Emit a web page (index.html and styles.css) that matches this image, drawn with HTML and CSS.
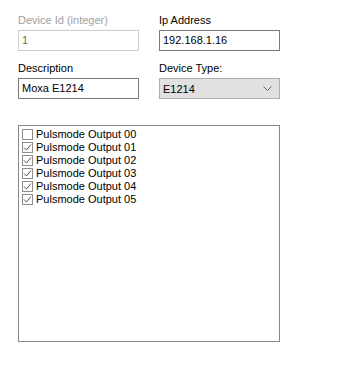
FILE: index.html
```html
<!DOCTYPE html>
<html lang="en">
<head>
    <meta charset="UTF-8">
    <title>Device</title>
    <link rel="stylesheet" href="styles.css">
</head>
<body>

<div class="form-grid">
    <div class="field">
        <label class="field-label disabled">Device Id (integer)</label>
        <div class="text-box disabled">1</div>
    </div>
    <div class="field">
        <label class="field-label">Ip Address</label>
        <div class="text-box">192.168.1.16</div>
    </div>
    <div class="field">
        <label class="field-label">Description</label>
        <div class="text-box">Moxa E1214</div>
    </div>
    <div class="field">
        <label class="field-label">Device Type:</label>
        <div class="combo-box">
            <span>E1214</span>
            <svg class="chevron" width="9" height="5" viewBox="0 0 9 5">
                <path d="M0.5 0.5 L4.5 4.5 L8.5 0.5" fill="none" stroke="#606060" stroke-width="1"/>
            </svg>
        </div>
    </div>
</div>

<div class="check-list">
    <div class="check-row"><span class="check-box"></span>Pulsmode Output 00</div>
    <div class="check-row"><span class="check-box checked"><svg width="11" height="11" viewBox="0 0 11 11"><path d="M2 5.5 L4.5 8 L9 2.5" fill="none" stroke="#555" stroke-width="1"/></svg></span>Pulsmode Output 01</div>
    <div class="check-row"><span class="check-box checked"><svg width="11" height="11" viewBox="0 0 11 11"><path d="M2 5.5 L4.5 8 L9 2.5" fill="none" stroke="#555" stroke-width="1"/></svg></span>Pulsmode Output 02</div>
    <div class="check-row"><span class="check-box checked"><svg width="11" height="11" viewBox="0 0 11 11"><path d="M2 5.5 L4.5 8 L9 2.5" fill="none" stroke="#555" stroke-width="1"/></svg></span>Pulsmode Output 03</div>
    <div class="check-row"><span class="check-box checked"><svg width="11" height="11" viewBox="0 0 11 11"><path d="M2 5.5 L4.5 8 L9 2.5" fill="none" stroke="#555" stroke-width="1"/></svg></span>Pulsmode Output 04</div>
    <div class="check-row"><span class="check-box checked"><svg width="11" height="11" viewBox="0 0 11 11"><path d="M2 5.5 L4.5 8 L9 2.5" fill="none" stroke="#555" stroke-width="1"/></svg></span>Pulsmode Output 05</div>
</div>

</body>
</html>
```

FILE: styles.css
```css
body {
    font-family: "Liberation Sans", Arial, sans-serif;
    font-size: 11px;
    color: #000;
    background-color: #fff;
    margin: 0;
    padding: 14px 0 0 18px;
}

.form-grid {
    display: grid;
    grid-template-columns: 121px 121px;
    column-gap: 20px;
    row-gap: 11px;
    width: 262px;
}

.field {
    display: flex;
    flex-direction: column;
}

.field-label {
    line-height: 13px;
    height: 13px;
    margin-bottom: 3px;
}

.field-label.disabled {
    color: #a0a0a0;
}

.text-box {
    box-sizing: border-box;
    height: 21px;
    border: 1px solid #7a7a7a;
    padding: 0 3px;
    line-height: 19px;
    white-space: nowrap;
}

.text-box.disabled {
    border-color: #cccccc;
    color: #6d6d6d;
}

.combo-box {
    box-sizing: border-box;
    height: 21px;
    border: 1px solid #adadad;
    background-color: #e1e1e1;
    padding: 0 7px 0 3px;
    display: flex;
    align-items: center;
    justify-content: space-between;
}

.chevron {
    display: block;
}

/* Checked list box */
.check-list {
    box-sizing: border-box;
    margin-top: 26px;
    width: 262px;
    height: 217px;
    border: 1px solid #828790;
    padding: 2px 3px;
}

.check-row {
    display: flex;
    align-items: center;
    height: 13px;
    line-height: 13px;
    white-space: nowrap;
}

.check-box {
    box-sizing: border-box;
    width: 11px;
    height: 11px;
    border: 1px solid #8f8f8f;
    margin-right: 3px;
    position: relative;
    flex-shrink: 0;
}

.check-box svg {
    position: absolute;
    left: -1px;
    top: -1px;
}
```
